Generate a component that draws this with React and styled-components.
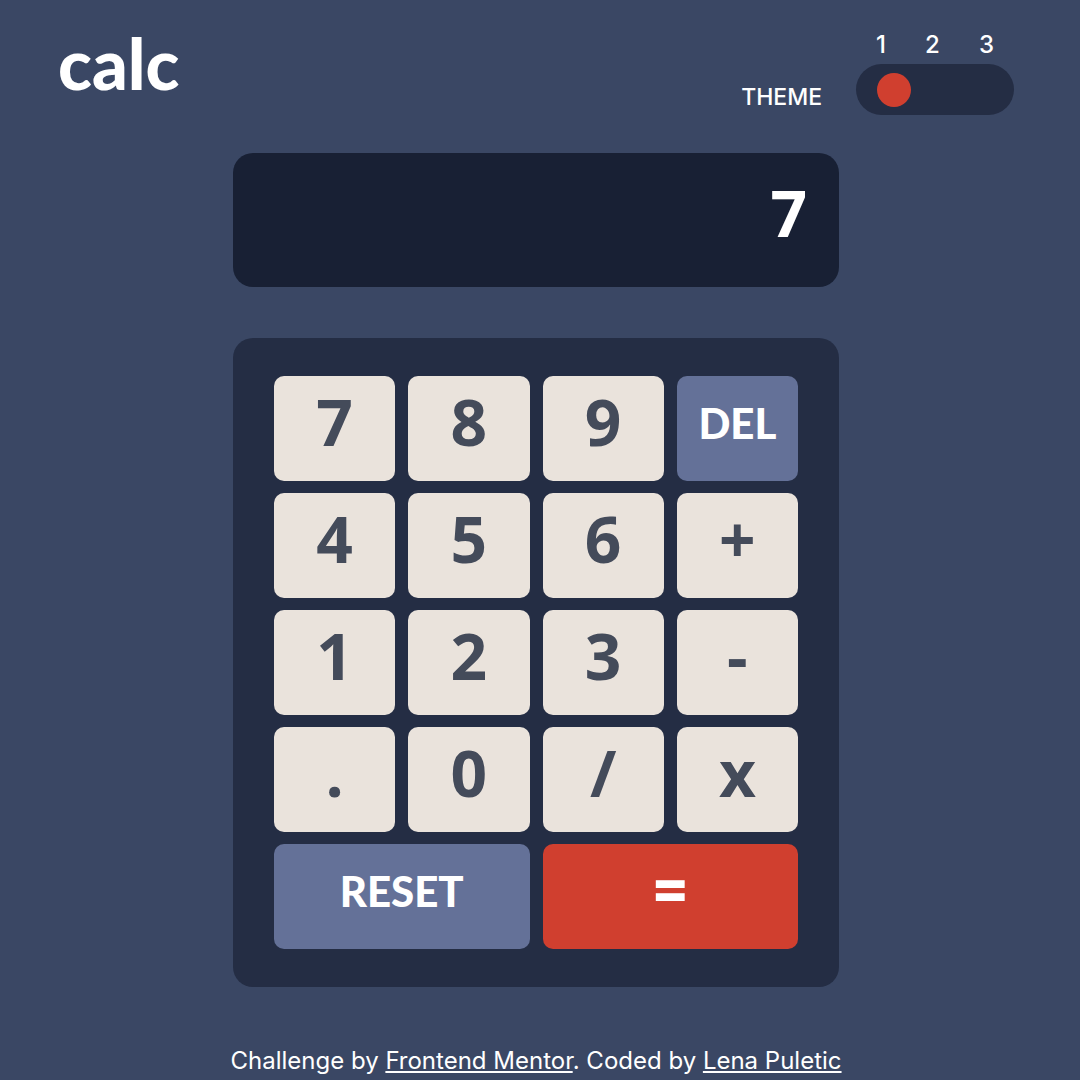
import { useState } from 'react';
import styled, { createGlobalStyle, css } from 'styled-components';

const colors = {
  page: '#3a4764',
  screen: '#182034',
  panel: '#242d44',
  key: '#eae3dc',
  keyText: '#444b5a',
  action: '#647198',
  accent: '#d03f2f',
  white: '#ffffff',
};

const GlobalStyle = createGlobalStyle`
  *, *::before, *::after { box-sizing: border-box; }
  body {
    margin: 0;
    background: ${colors.page};
    color: ${colors.white};
    font-family: Inter, "Open Sans", sans-serif;
  }
`;

const Page = styled.div`
  display: flex;
  flex-direction: column;
  padding-right: 8px;
`;

const Header = styled.header`
  display: flex;
  justify-content: space-between;
  align-items: flex-start;
  padding: 28px 58px 38px;
`;

const Logo = styled.h1`
  margin: 0;
  font-family: Lato, sans-serif;
  font-size: 70px;
  font-weight: 900;
  line-height: 70px;
`;

const ThemePicker = styled.fieldset`
  display: flex;
  align-items: flex-end;
  gap: 34px;
  margin: 0;
  padding: 5px 0 0;
  border: 0;
`;

const ThemeTitle = styled.span`
  padding-bottom: 3px;
  font-size: 23px;
  font-weight: 500;
  line-height: 30px;
`;

const Switch = styled.div`
  width: 158px;
`;

const Numbers = styled.div`
  display: flex;
  justify-content: space-between;
  padding: 0 20px 7px;
  font-size: 24px;
  font-weight: 500;
  line-height: 24px;
`;

const Track = styled.div`
  display: flex;
  justify-content: space-between;
  align-items: center;
  height: 51px;
  padding: 0 21px;
  border-radius: 26px;
  background: ${colors.panel};
`;

const Knob = styled.input`
  appearance: none;
  width: 34px;
  height: 34px;
  margin: 0;
  border-radius: 50%;
  cursor: pointer;

  &:checked {
    background: ${colors.accent};
  }
`;

const Calculator = styled.main`
  width: 100%;
  max-width: 606px;
  margin: 0 auto;
`;

const Screen = styled.output`
  display: block;
  min-height: 134px;
  padding: 28px 32px 42px;
  border-radius: 20px;
  background: ${colors.screen};
  font-family: "Open Sans", sans-serif;
  font-size: 64px;
  font-weight: 700;
  line-height: 64px;
  text-align: right;
  overflow: hidden;
`;

const Keypad = styled.div`
  display: grid;
  grid-template-columns: repeat(4, 1fr);
  grid-auto-rows: 105px;
  gap: 12px 13px;
  margin-top: 51px;
  padding: 38px 41px;
  border-radius: 20px;
  background: ${colors.panel};
`;

const tones = {
  plain: css`
    padding-bottom: 14px;
    background: ${colors.key};
    color: ${colors.keyText};
    font-family: "Open Sans", sans-serif;
    font-size: 64px;
    font-weight: 700;
  `,
  action: css`
    padding-bottom: 12px;
    background: ${colors.action};
    color: ${colors.white};
    font-family: Lato, sans-serif;
    font-size: 42px;
    font-weight: 900;
  `,
  equals: css`
    padding-bottom: 16px;
    background: ${colors.accent};
    color: ${colors.white};
    font-family: "Open Sans", sans-serif;
    font-size: 58px;
    font-weight: 800;
  `,
};

const Key = styled.button`
  grid-column: span ${({ $span }) => $span};
  padding: 0;
  border: 0;
  border-radius: 10px;
  line-height: 64px;
  cursor: pointer;
  ${({ $tone }) => tones[$tone]}
`;

const Footer = styled.footer`
  padding: 58px 16px 4px;
  font-size: 24px;
  line-height: 32px;
  text-align: center;
`;

const FooterLink = styled.a`
  color: inherit;
  text-decoration: underline;
`;

const keys = [
  '7', '8', '9', 'DEL',
  '4', '5', '6', '+',
  '1', '2', '3', '-',
  '.', '0', '/', 'x',
  'RESET', '=',
];

const toneOf = (key) => {
  if (key === '=') return 'equals';
  return key === 'DEL' || key === 'RESET' ? 'action' : 'plain';
};

const operations = {
  '+': (a, b) => a + b,
  '-': (a, b) => a - b,
  '/': (a, b) => a / b,
  x: (a, b) => a * b,
};

const initial = { value: '7', stored: null, operator: null, fresh: false };

function press(state, key) {
  if (key === 'RESET') return { ...initial, value: '0' };
  if (key === 'DEL') return { ...state, value: state.value.slice(0, -1) || '0' };
  if (key === '=' || operations[key]) {
    const result = state.operator && !state.fresh
      ? operations[state.operator](state.stored, Number(state.value))
      : Number(state.value);
    return {
      value: String(result),
      stored: result,
      operator: key === '=' ? null : key,
      fresh: true,
    };
  }
  if (key === '.' && state.value.includes('.') && !state.fresh) return state;
  const base = state.fresh || (state.value === '0' && key !== '.') ? '' : state.value;
  return { ...state, value: base + key, fresh: false };
}

export default function App() {
  const [state, setState] = useState(initial);
  const [theme, setTheme] = useState('1');

  return (
    <>
      <GlobalStyle />
      <Page>
        <Header>
          <Logo>calc</Logo>
          <ThemePicker aria-labelledby="theme-title">
            <ThemeTitle id="theme-title">THEME</ThemeTitle>
            <Switch>
              <Numbers>
                {['1', '2', '3'].map((n) => (
                  <label key={n} htmlFor={`theme-${n}`}>{n}</label>
                ))}
              </Numbers>
              <Track>
                {['1', '2', '3'].map((n) => (
                  <Knob
                    key={n}
                    type="radio"
                    name="theme"
                    id={`theme-${n}`}
                    checked={theme === n}
                    onChange={() => setTheme(n)}
                  />
                ))}
              </Track>
            </Switch>
          </ThemePicker>
        </Header>
        <Calculator>
          <Screen>{state.value}</Screen>
          <Keypad>
            {keys.map((key) => (
              <Key
                key={key}
                type="button"
                $tone={toneOf(key)}
                $span={key === 'RESET' || key === '=' ? 2 : 1}
                onClick={() => setState((s) => press(s, key))}
              >
                {key}
              </Key>
            ))}
          </Keypad>
        </Calculator>
        <Footer>
          Challenge by <FooterLink href="#frontend-mentor">Frontend Mentor</FooterLink>. Coded by{' '}
          <FooterLink href="#lena-puletic">Lena Puletic</FooterLink>
        </Footer>
      </Page>
    </>
  );
}
